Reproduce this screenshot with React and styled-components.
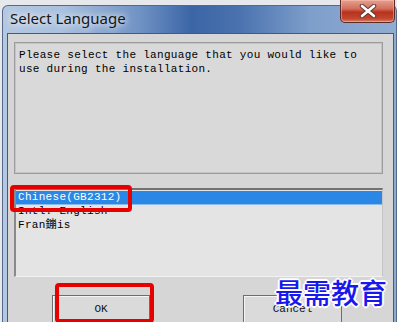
import React from "react";
import styled, { createGlobalStyle } from "styled-components";

const Global = createGlobalStyle`
  html, body { margin: 0; padding: 0; background: #e6e8eb; overflow: hidden; }
  body { width: 397px; height: 322px; }
`;

const Stage = styled.div`
  position: relative;
  width: 397px;
  height: 322px;
  overflow: hidden;
`;

const Window = styled.div`
  margin: 5px 0 0 2px;
  width: 395px;
  box-sizing: border-box;
  height: 330px;
  border: 1px solid #56698a;
  border-bottom: none;
  border-radius: 6px 6px 0 0;
  padding: 0 2px 0 4px;
  display: flex;
  flex-direction: column;
  background: linear-gradient(90deg, #b4c8e1 0%, #a9c0de 15%, #6f92c4 35%, #3b65a6 48%, #4a72ae 60%, #7e9ecb 78%, #90acd2 100%);
`;

const TitleBar = styled.div`
  height: 27px;
  display: flex;
  align-items: flex-start;
  justify-content: space-between;
`;

const Title = styled.div`
  font-family: "Noto Sans", "Open Sans", sans-serif;
  font-size: 15px;
  color: #151515;
  line-height: 20px;
  margin-top: 2px;
  margin-left: 3px;
  text-shadow: 0 0 6px rgba(255, 255, 255, 0.9), 0 0 10px rgba(255, 255, 255, 0.7);
`;

const CloseButton = styled.div`
  margin-top: -6px;
  margin-right: -1px;
  width: 55px;
  height: 23px;
  box-sizing: border-box;
  border: 1px solid #5e2a24;
  border-top: none;
  border-radius: 0 0 5px 5px;
  background: linear-gradient(180deg, #e6a191 0%, #d36d5a 40%, #b7321f 55%, #c2482f 85%, #d8836c 100%);
  display: flex;
  align-items: center;
  justify-content: center;
  box-shadow: inset 0 0 0 1px rgba(255, 200, 190, 0.45);
`;

const Client = styled.div`
  flex: 1;
  background: #d6d6d6;
  border: 1px solid #3e5b88;
  border-bottom: none;
  padding: 8px 10px 0 6px;
  display: flex;
  flex-direction: column;
`;

const MessageBox = styled.div`
  height: 132px;
  box-sizing: border-box;
  background: #d9d9d9;
  border: 1px solid #9c9c9c;
  box-shadow: inset 0 0 0 1px #c4c4c4;
  padding: 5px 4px;
  font-family: "Liberation Mono", monospace;
  font-size: 11px;
  letter-spacing: 0.3px;
  line-height: 14px;
  color: #000;
`;

const ListBox = styled.div`
  margin-top: 14px;
  height: 89px;
  box-sizing: border-box;
  background: #e4e4e4;
  border-top: 2px solid #727272;
  border-left: 2px solid #8a8a8a;
  border-right: 1px solid #c4c4c4;
  border-bottom: 1px solid #f2f2f2;
  padding-top: 1px;
  display: flex;
  flex-direction: column;
  font-family: "Liberation Mono", "Noto Sans CJK SC", monospace;
  font-size: 11px;
  letter-spacing: 0.3px;
`;

const Item = styled.div`
  height: 13px;
  line-height: 13px;
  padding-left: 2px;
  color: ${(p) => (p.$selected ? "#ffffff" : "#000000")};
  background: ${(p) => (p.$selected ? "#2b87e5" : "transparent")};
  border-bottom: 1px solid ${(p) => (p.$selected ? "#8bbcef" : "transparent")};
  white-space: nowrap;
`;

const ButtonRow = styled.div`
  margin-top: 18px;
  display: flex;
  gap: 93px;
  padding-left: 38px;
`;

const Button = styled.div`
  width: ${(p) => p.$w}px;
  height: 28px;
  box-sizing: border-box;
  border: 1px solid #6d6d6d;
  box-shadow: inset 1px 1px 0 #f4f4f4;
  background: #dadada;
  display: flex;
  align-items: center;
  justify-content: center;
  font-family: "Liberation Mono", monospace;
  font-size: 11px;
  color: #111;
  padding-bottom: 1px;
`;

const Annotation = styled.div`
  position: absolute;
  box-sizing: border-box;
  border: 4px solid #e60000;
  border-radius: 4px;
`;

const Watermark = styled.div`
  position: absolute;
  left: 275px;
  top: 274px;
  font-family: "Noto Sans CJK SC", sans-serif;
  font-size: 28px;
  font-weight: 500;
  line-height: 36px;
  color: #1818ee;
  text-shadow:
    1px 1px 0 #fff, -1px -1px 0 #fff, 1px -1px 0 #fff, -1px 1px 0 #fff,
    2px 0 0 #fff, -2px 0 0 #fff, 0 2px 0 #fff, 0 -2px 0 #fff;
`;

export default function App() {
  return (
    <Stage>
      <Global />
      <Window>
        <TitleBar>
          <Title>Select Language</Title>
          <CloseButton>
            <svg width="18" height="14" viewBox="0 0 18 14">
              <path d="M3 2 L15 12 M15 2 L3 12" stroke="#5a3a36" strokeWidth="4.5" strokeLinecap="round" />
              <path d="M3 2 L15 12 M15 2 L3 12" stroke="#ffffff" strokeWidth="2.6" strokeLinecap="round" />
            </svg>
          </CloseButton>
        </TitleBar>
        <Client>
          <MessageBox>
            Please select the language that you would like to
            <br />
            use during the installation.
          </MessageBox>
          <ListBox>
            <Item $selected>Chinese(GB2312)</Item>
            <Item>Intl. English</Item>
            <Item>Fran鏰is</Item>
          </ListBox>
          <ButtonRow>
            <Button $w={98}>OK</Button>
            <Button $w={99}>Cancel</Button>
          </ButtonRow>
        </Client>
      </Window>
      <Annotation style={{ left: 10, top: 185, width: 122, height: 27 }} />
      <Annotation style={{ left: 55, top: 283, width: 99, height: 40 }} />
      <Watermark>最需教育</Watermark>
    </Stage>
  );
}
